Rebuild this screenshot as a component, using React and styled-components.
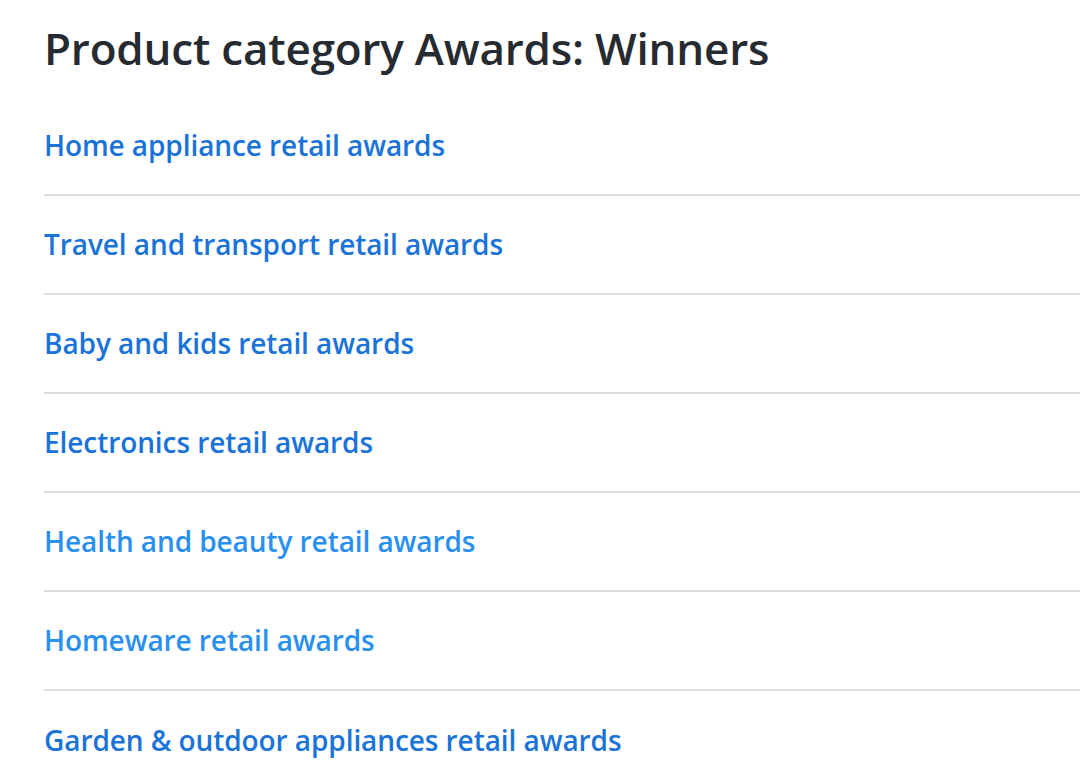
import React from 'react';
import styled, { createGlobalStyle } from 'styled-components';

const GlobalStyle = createGlobalStyle`
  * {
    margin: 0;
    padding: 0;
    box-sizing: border-box;
  }

  body {
    font-family: 'Open Sans', 'Liberation Sans', sans-serif;
    background: #ffffff;
    color: #262a31;
    -webkit-font-smoothing: antialiased;
  }
`;

const Page = styled.main`
  padding-left: 44px;
  overflow: hidden;
`;

const Title = styled.h1`
  height: 97px;
  display: flex;
  align-items: center;
  padding-bottom: 2px;
  font-size: 44px;
  font-weight: 600;
  letter-spacing: -0.2px;
  color: #262a31;
`;

const List = styled.ul`
  list-style: none;
`;

const Item = styled.li`
  height: 99px;
  display: flex;
  align-items: center;
  border-bottom: 2px solid #dadde1;
  padding-bottom: 2px;

  &:last-child {
    border-bottom: none;
  }
`;

const Link = styled.a`
  font-size: 28px;
  font-weight: 600;
  letter-spacing: -0.08px;
  text-decoration: none;
  color: ${p => (p.$visited ? '#2a90f0' : '#1a73d9')};
`;

const awards = [
  { label: 'Home appliance retail awards' },
  { label: 'Travel and transport retail awards' },
  { label: 'Baby and kids retail awards' },
  { label: 'Electronics retail awards' },
  { label: 'Health and beauty retail awards', visited: true },
  { label: 'Homeware retail awards', visited: true },
  { label: 'Garden & outdoor appliances retail awards' },
];

export default function App() {
  return (
    <>
      <GlobalStyle />
      <Page>
        <Title>Product category Awards: Winners</Title>
        <List>
          {awards.map(a => (
            <Item key={a.label}>
              <Link href="#" $visited={a.visited}>{a.label}</Link>
            </Item>
          ))}
        </List>
      </Page>
    </>
  );
}
